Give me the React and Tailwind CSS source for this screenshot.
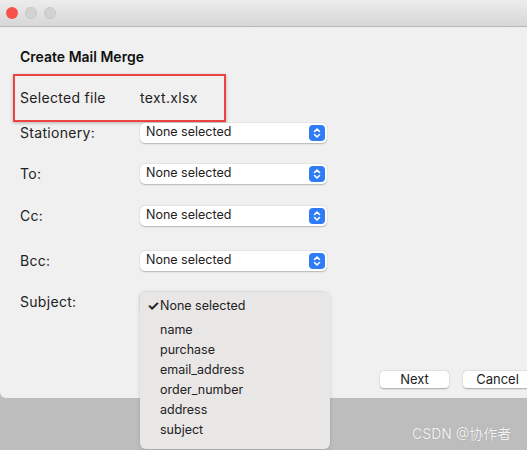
import React from "react";

function Stepper() {
  return (
    <div className="w-[16px] h-[16px] rounded-[4px] bg-[#2e7cf6] flex items-center justify-center">
      <svg width="8" height="12" viewBox="0 0 8 12" fill="none" stroke="white" strokeWidth="1.6" strokeLinecap="round" strokeLinejoin="round">
        <path d="M1.5 4.5 L4 2 L6.5 4.5" />
        <path d="M1.5 7.5 L4 10 L6.5 7.5" />
      </svg>
    </div>
  );
}

function Select({ hidden }) {
  return (
    <div className="w-[187px] h-[20px] bg-white rounded-[5px] shadow-[0_0.5px_1.5px_rgba(0,0,0,0.25)] flex items-center justify-between pl-[6px] pr-[2px]">
      <span className="text-[12.5px] text-[#222]">{hidden ? "" : "None selected"}</span>
      <Stepper />
    </div>
  );
}

function Row({ label, mt }) {
  return (
    <div className={`flex items-center ${mt}`}>
      <div className="w-[120px] text-[14px] tracking-[0.3px] text-[#222]">{label}</div>
      <Select />
    </div>
  );
}

export default function App() {
  const items = ["name", "purchase", "email_address", "order_number", "address", "subject"];
  return (
    <div className="w-[527px] h-[450px] bg-[#bdbdbd] relative overflow-hidden" style={{ fontFamily: "Inter, 'Noto Sans', sans-serif" }}>
      <div className="h-[398px] bg-[#f0f0f0] rounded-bl-[6px] flex flex-col">
        <div className="h-[27px] bg-gradient-to-b from-[#ececec] to-[#d7d7d7] border-b border-[#b9b9b9] flex items-center gap-[7px] pl-[6px]">
          <div className="w-[12px] h-[12px] rounded-full bg-[#f4524b]" />
          <div className="w-[12px] h-[12px] rounded-full bg-[#d2d2d2] border border-[#c8c8c8]" />
          <div className="w-[12px] h-[12px] rounded-full bg-[#d2d2d2] border border-[#c8c8c8]" />
        </div>
        <div className="flex flex-col pl-[20px] pt-[21px] relative flex-1">
          <div className="text-[14px] font-semibold text-[#111] leading-[17px]">Create Mail Merge</div>
          <div className="mt-[9px] ml-[-7px] w-[213px] h-[48px] border-2 border-[#ee4343] shadow-[0_1px_3px_rgba(0,0,0,0.25)] flex items-center pl-[5px] pb-[2px]">
            <div className="w-[120px] text-[14px] tracking-[0.3px] text-[#222]">Selected file</div>
            <div className="text-[14px] tracking-[0.3px] text-[#222]">text.xlsx</div>
          </div>
          <Row label="Stationery:" mt="mt-0" />
          <Row label="To:" mt="mt-[20px]" />
          <Row label="Cc:" mt="mt-[21px]" />
          <Row label="Bcc:" mt="mt-[24px]" />
          <div className="flex items-center mt-[20px] relative">
            <div className="w-[120px] text-[14px] tracking-[0.3px] text-[#222]">Subject:</div>
            <Select hidden />
            <div className="absolute left-[120px] top-[1px] w-[190px] h-[157px] bg-[#e9e6e6] rounded-[6px] shadow-[0_1px_4px_rgba(0,0,0,0.15)] pt-[4px] z-10">
              <div className="flex items-center h-[20px] pl-[7px] text-[12.5px] text-[#222]">
                <span className="w-[13px] text-[14px] font-bold leading-none">✓</span>
                <span>None selected</span>
              </div>
              <div className="mt-[4px] flex flex-col">
                {items.map((t) => (
                  <div key={t} className="h-[20px] flex items-center pl-[20px] text-[12.5px] text-[#222]">{t}</div>
                ))}
              </div>
            </div>
          </div>
          <div className="mt-auto mb-[10px] flex gap-[14px] ml-auto mr-[-5px]">
            <div className="w-[69px] h-[17px] bg-white rounded-[4px] shadow-[0_0.5px_1.5px_rgba(0,0,0,0.3)] flex items-center justify-center text-[13px] text-[#222]">Next</div>
            <div className="w-[69px] h-[17px] bg-white rounded-[4px] shadow-[0_0.5px_1.5px_rgba(0,0,0,0.3)] flex items-center justify-center text-[13px] text-[#222]">Cancel</div>
          </div>
        </div>
      </div>
      <div className="absolute left-[412px] top-[423px] text-[14px] text-[#f2f2f2] [text-shadow:0_0_1px_#888]" style={{ fontFamily: "Inter, 'Noto Sans CJK SC', sans-serif" }}>CSDN @协作者</div>
    </div>
  );
}
